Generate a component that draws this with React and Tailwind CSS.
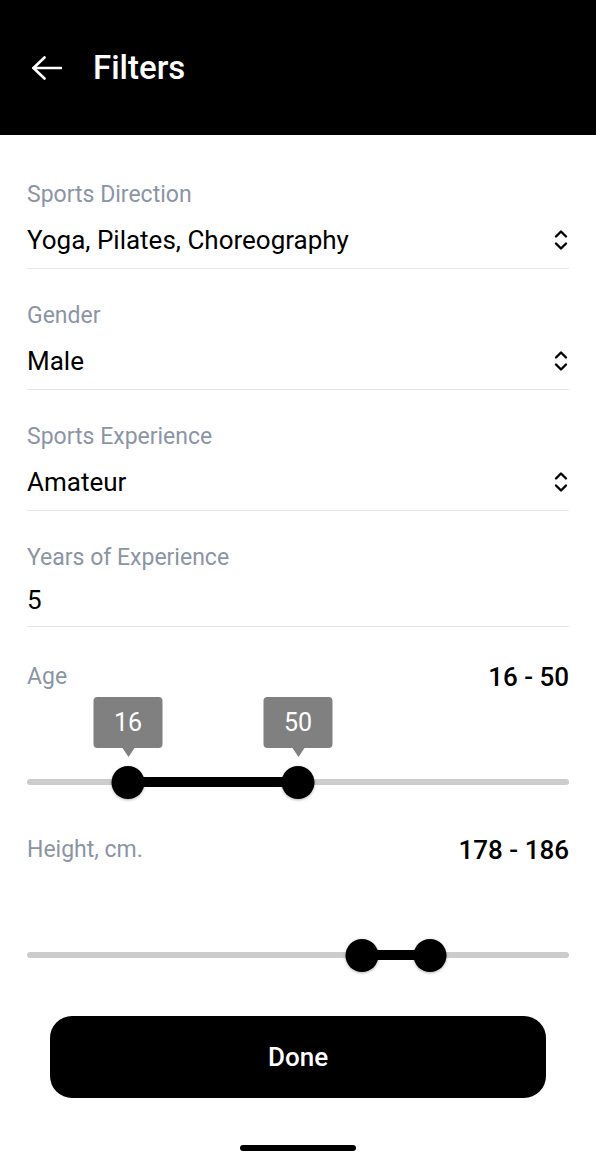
import React from "react";

const font = { fontFamily: "Roboto, 'Noto Sans', sans-serif" };

function Chevrons() {
  return (
    <svg width="14" height="22" viewBox="0 0 14 22" fill="none" stroke="#000" strokeWidth="2.4" strokeLinecap="round" strokeLinejoin="round">
      <path d="M2 7.5 L7 2.5 L12 7.5" />
      <path d="M2 14.5 L7 19.5 L12 14.5" />
    </svg>
  );
}

function SelectField({ label, value, chevron = true }) {
  return (
    <div className={`border-b border-[#e3e7ee] ${chevron ? "pb-[12px]" : "pb-[10px]"}`}>
      <div className="text-[23px] leading-[28px] text-[#8b95a5]">{label}</div>
      <div className={`${chevron ? "mt-[15px]" : "mt-[12px]"} flex items-center justify-between`}>
        <span className="text-[26px] leading-[32px] text-black">{value}</span>
        {chevron && (
          <span className="mr-[1px] flex items-center">
            <Chevrons />
          </span>
        )}
      </div>
    </div>
  );
}

function RangeSlider({ lo, hi, loPct, hiPct, tooltips }) {
  const inset = 16;
  const pos = (p) => `calc(${inset}px + (100% - ${inset * 2}px) * ${p})`;
  return (
    <div className="relative h-[109px]">
      <div className="absolute left-0 right-0 top-[88px] h-[6px] rounded-full bg-[#cccccc]" />
      <div
        className="absolute top-[86px] h-[10px] bg-black"
        style={{ left: pos(loPct), width: `calc((100% - ${inset * 2}px) * ${hiPct - loPct})` }}
      />
      {[
        [lo, loPct],
        [hi, hiPct],
      ].map(([v, p], i) => (
        <React.Fragment key={i}>
          {tooltips && (
            <div
              className="absolute top-[6px] flex -translate-x-1/2 flex-col items-center"
              style={{ left: pos(p) }}
            >
              <div className="flex h-[51px] w-[69px] items-center justify-center rounded-[4px] bg-[#808080] text-[25px] text-white">
                {v}
              </div>
              <div className="h-0 w-0 border-x-[6px] border-t-[9px] border-x-transparent border-t-[#808080]" />
            </div>
          )}
          <div
            className="absolute top-[75px] h-[33px] w-[33px] -translate-x-1/2 rounded-full bg-black shadow-[0_1px_3px_rgba(0,0,0,0.3)]"
            style={{ left: pos(p) }}
          />
        </React.Fragment>
      ))}
    </div>
  );
}

export default function App() {
  return (
    <div className="min-h-[1164px] w-full bg-white" style={font}>
      <header className="flex h-[135px] items-center bg-black pl-[32px]">
        <svg width="30" height="24" viewBox="0 0 30 24" fill="none" stroke="#fff" strokeWidth="2.6" strokeLinecap="round" strokeLinejoin="round">
          <path d="M1.5 12 H29" />
          <path d="M12.5 1.5 L1.5 12 L12.5 22.5" />
        </svg>
        <h1 className="ml-[31px] text-[33px] font-medium leading-none text-white">Filters</h1>
      </header>

      <main className="px-[27px] pt-[46px]">
        <div className="flex flex-col gap-[33px]">
          <SelectField label="Sports Direction" value="Yoga, Pilates, Choreography" />
          <SelectField label="Gender" value="Male" />
          <SelectField label="Sports Experience" value="Amateur" />
          <SelectField label="Years of Experience" value="5" chevron={false} />
        </div>

        <div className="mt-[36px] flex items-center justify-between">
          <span className="text-[23px] leading-[28px] text-[#8b95a5]">Age</span>
          <span className="text-[26px] font-medium leading-[28px] text-black">16 - 50</span>
        </div>
        <RangeSlider lo={16} hi={50} loPct={0.1667} hiPct={0.5} tooltips />

        <div className="mt-[36px] flex items-center justify-between">
          <span className="text-[23px] leading-[28px] text-[#8b95a5]">Height, cm.</span>
          <span className="text-[26px] font-medium leading-[28px] text-black">178 - 186</span>
        </div>
        <RangeSlider lo={178} hi={186} loPct={0.6255} hiPct={0.7588} />

        <div className="mt-[43px] px-[23px]">
          <button className="flex h-[82px] w-full items-center justify-center rounded-[22px] bg-black text-[26px] font-medium text-white">
            Done
          </button>
        </div>

        <div className="mt-[47px] flex justify-center">
          <div className="h-[6px] w-[116px] rounded-full bg-black" />
        </div>
      </main>
    </div>
  );
}
